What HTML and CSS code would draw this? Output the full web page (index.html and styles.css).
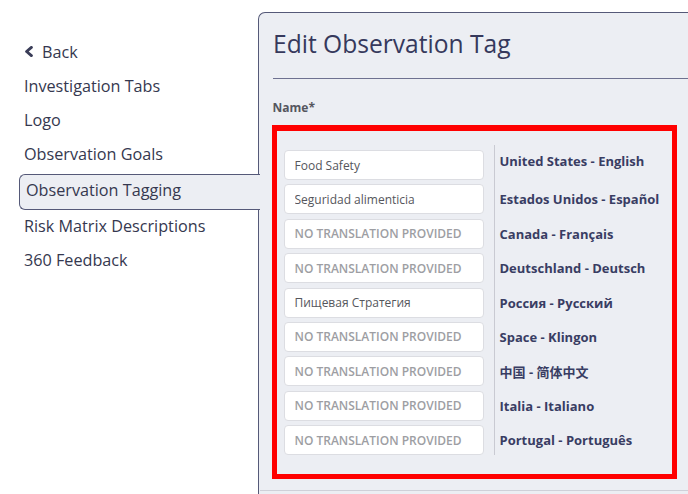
FILE: index.html
```html
<!DOCTYPE html>
<html lang="en">
<head>
<meta charset="utf-8">
<title>Edit Observation Tag</title>
<link rel="stylesheet" href="styles.css">
</head>
<body>
<div class="page">
  <nav class="sidebar">
    <a class="nav-item back" href="#"><svg class="chev" width="10" height="11" viewBox="0 0 10 11"><polyline points="7.4,1.4 2.6,5.5 7.4,9.6" fill="none" stroke="#3a3d58" stroke-width="2.9" stroke-linecap="round" stroke-linejoin="round"/></svg>Back</a>
    <a class="nav-item" href="#">Investigation Tabs</a>
    <a class="nav-item" href="#">Logo</a>
    <a class="nav-item" href="#">Observation Goals</a>
    <a class="nav-item active" href="#">Observation Tagging</a>
    <a class="nav-item" href="#">Risk Matrix Descriptions</a>
    <a class="nav-item" href="#">360 Feedback</a>
  </nav>
  <main class="panel">
    <h1 class="title">Edit Observation Tag</h1>
    <div class="rule"></div>
    <div class="field-label">Name*</div>
    <div class="highlight">
      <div class="translations">
        <div class="inputs">
          <input class="tr-input" type="text" value="Food Safety">
          <input class="tr-input" type="text" value="Seguridad alimenticia">
          <input class="tr-input" type="text" placeholder="NO TRANSLATION PROVIDED">
          <input class="tr-input" type="text" placeholder="NO TRANSLATION PROVIDED">
          <input class="tr-input" type="text" value="Пищевая Стратегия">
          <input class="tr-input" type="text" placeholder="NO TRANSLATION PROVIDED">
          <input class="tr-input" type="text" placeholder="NO TRANSLATION PROVIDED">
          <input class="tr-input" type="text" placeholder="NO TRANSLATION PROVIDED">
          <input class="tr-input" type="text" placeholder="NO TRANSLATION PROVIDED">
        </div>
        <div class="labels">
          <div class="lang first">United States - English</div>
          <div class="lang">Estados Unidos - Español</div>
          <div class="lang">Canada - Français</div>
          <div class="lang">Deutschland - Deutsch</div>
          <div class="lang">Россия - Русский</div>
          <div class="lang">Space - Klingon</div>
          <div class="lang">中国 - 简体中文</div>
          <div class="lang">Italia - Italiano</div>
          <div class="lang">Portugal - Português</div>
        </div>
      </div>
    </div>
    <div class="bottom-line"></div>
  </main>
</div>
</body>
</html>
```
FILE: styles.css
```css
html, body {
  margin: 0;
  padding: 0;
  background: #ffffff;
  overflow: hidden;
}
body {
  font-family: "Open Sans", "Noto Sans", "Noto Sans CJK SC", sans-serif;
  color: #36395a;
}
.page {
  display: flex;
  align-items: flex-start;
  width: 688px;
  height: 494px;
  overflow: hidden;
}
.sidebar {
  width: 258px;
  flex: 0 0 258px;
  padding-top: 35px;
  display: flex;
  flex-direction: column;
}
.nav-item {
  display: flex;
  align-items: center;
  height: 34px;
  line-height: 34px;
  padding-left: 24px;
  font-size: 16.2px;
  color: #35384f;
  text-decoration: none;
  white-space: nowrap;
}
.chev {
  margin: 0 8px 0 0;
  position: relative;
  top: -1px;
}
.nav-item.active {
  position: relative;
  z-index: 1;
  height: 30px;
  line-height: 30px;
  padding: 0 0 4px 6px;
  margin: 3px -2px -1px 19px;
  border: 1.5px solid #555978;
  border-right: none;
  border-radius: 6px 0 0 6px;
  background: #eceef3;
  align-items: flex-start;
}
.panel {
  flex: 0 0 460px;
  height: 490px;
  margin-top: 12px;
  background: #eceef3;
  border-top: 1.5px solid #555978;
  border-left: 1.5px solid #555978;
  border-top-left-radius: 7px;
  padding: 16px 0 0 12.5px;
  box-sizing: border-box;
}
.title {
  margin: 0 0 0 1.5px;
  font-size: 24.6px;
  font-weight: 400;
  line-height: 30px;
  color: #36395c;
  white-space: nowrap;
}
.rule {
  height: 1px;
  background: #6e7190;
  margin-top: 19px;
  margin-left: 1px;
}
.field-label {
  margin-top: 21px;
  margin-left: 1px;
  font-size: 12px;
  font-weight: 700;
  line-height: 16px;
  color: #55565e;
}
.highlight {
  margin-top: 9px;
  width: 405px;
  height: 354px;
  box-sizing: border-box;
  border: 5px solid #ff0000;
  border-top-width: 6px;
}
.translations {
  display: flex;
  padding: 14px 0 0 7px;
}
.inputs {
  display: flex;
  flex-direction: column;
  gap: 4.4px;
  margin-top: 5px;
  width: 200px;
}
.tr-input {
  box-sizing: border-box;
  width: 200px;
  height: 30px;
  margin: 0;
  padding: 0 10px;
  border: 1px solid #dcdde2;
  border-radius: 4px;
  background: #ffffff;
  font-family: "Open Sans", "Noto Sans", sans-serif;
  font-size: 12px;
  color: #55565c;
  outline: none;
}
.tr-input::placeholder {
  color: #9d9ea3;
  font-weight: 600;
  opacity: 1;
}
.labels {
  display: flex;
  flex-direction: column;
  gap: 4.4px;
  margin-left: 10px;
  padding: 5px 0 0 5px;
  border-left: 1.5px solid #c9cad2;
}
.lang {
  height: 30px;
  display: flex;
  align-items: center;
  font-size: 13px;
  font-weight: 700;
  color: #393d63;
  white-space: nowrap;
}
.lang.first {
  align-items: flex-start;
  line-height: 22px;
}
.bottom-line {
  margin-top: 11px;
  margin-left: -12px;
  height: 1px;
  background: #cfd0d8;
}
```
